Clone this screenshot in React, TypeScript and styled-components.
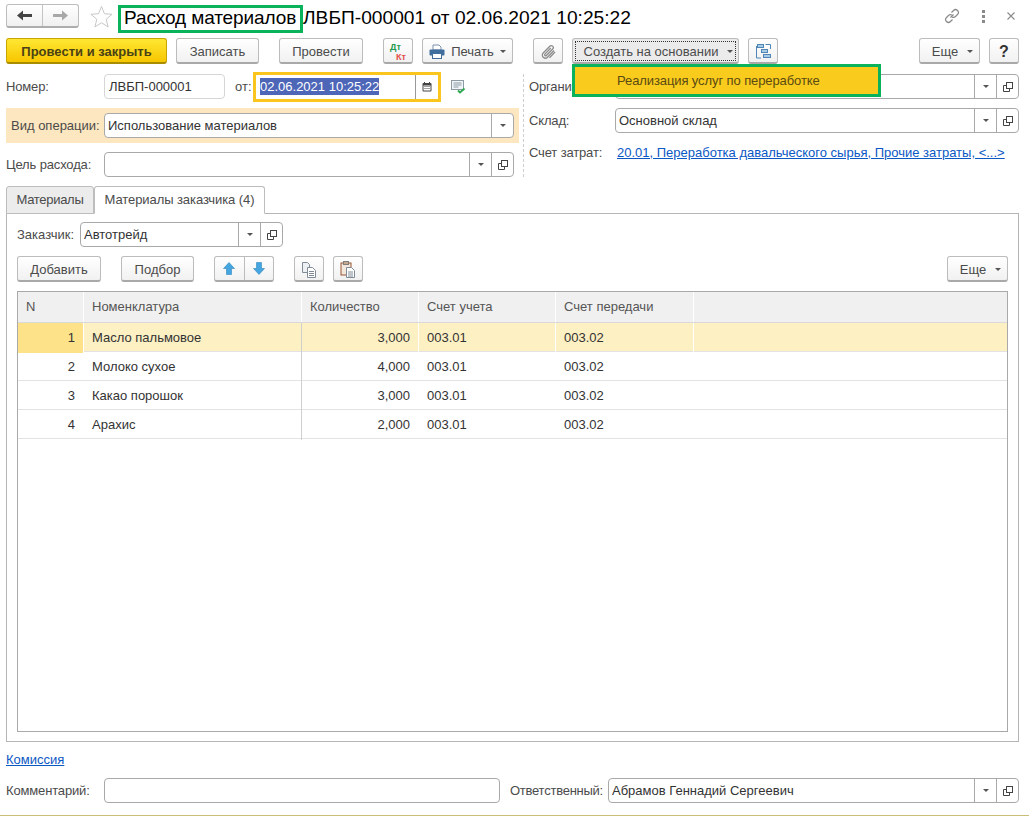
import React from "react"
import styled, { createGlobalStyle } from "styled-components"

const GlobalStyle = createGlobalStyle`
  html, body {
    margin: 0;
    padding: 0;
    background: #fff;
  }
  body {
    font-family: "Liberation Sans", Arial, sans-serif;
    font-size: 13px;
    color: #4b4b4b;
  }
`

const Caret = () => <CaretMark />

const OpenIcon = () => (
  <svg width="10" height="10" viewBox="0 0 10 10" fill="none" stroke="#444" strokeWidth="1">
    <rect x="3.5" y="0.5" width="6" height="6" />
    <path d="M3.5 3.5H0.5V9.5H6.5V6.5" />
  </svg>
)

const StarIcon = () => (
  <svg width="23" height="23" viewBox="0 0 24 24" fill="none" stroke="#c4c4c4" strokeWidth="1">
    <path d="M12 1.5l3 7.6 8 .6-6.1 5.2 2 8-6.9-4.4-6.9 4.4 2-8L.9 9.7l8-.6z" />
  </svg>
)

const NavArrow = ({ flip, color }: { flip?: boolean; color: string }) => (
  <svg width="15" height="11" viewBox="0 0 15 11" style={{ transform: flip ? "scaleX(-1)" : undefined }}>
    <path d="M0 5.5L6 0.5V4H15V7H6V10.5Z" fill={color} />
  </svg>
)

const LinkIcon = () => (
  <svg width="16" height="16" viewBox="0 0 16 16" fill="none" stroke="#8a8a8a" strokeWidth="1.2">
    <path d="M6.5 9.5l3-3" />
    <path d="M7.5 4.5l2-2a2.8 2.8 0 0 1 4 4l-2 2a2.8 2.8 0 0 1-3.5.4" />
    <path d="M8.5 11.5l-2 2a2.8 2.8 0 0 1-4-4l2-2a2.8 2.8 0 0 1 3.5-.4" />
  </svg>
)

const CloseIcon = () => (
  <svg width="8" height="8" viewBox="0 0 8 8" stroke="#8a8a8a" strokeWidth="1.1">
    <path d="M0.5 0.5l7 7M7.5 0.5l-7 7" />
  </svg>
)

const PrinterIcon = () => (
  <svg width="16" height="15" viewBox="0 0 16 15">
    <path d="M4 1h6l2 2v3H4z" fill="#fff" stroke="#7d93ab" />
    <rect x="0.5" y="5.5" width="15" height="6" rx="1" fill="#3f6d9c" />
    <rect x="3.5" y="9.5" width="9" height="5" fill="#fff" stroke="#3f6d9c" />
  </svg>
)

const ClipIcon = () => (
  <svg width="15" height="16" viewBox="0 0 15 16" fill="none" stroke="#8c8c8c" strokeWidth="1.3">
    <path d="M13 6.5l-6.5 6.7a3 3 0 0 1-4.3-4.2L8.8 2.2a2 2 0 0 1 2.9 2.8L5.4 11.5a1 1 0 0 1-1.5-1.4L9.8 4" />
    <path d="M14 8l-5.5 5.7" />
  </svg>
)

const StructureIcon = () => (
  <svg width="15" height="15" viewBox="0 0 15 15" fill="none" stroke="#4f86b5" strokeWidth="1">
    <rect x="1.5" y="0.5" width="6" height="3" fill="#a9cbe6" />
    <rect x="5.5" y="5.5" width="6" height="3" fill="#a9cbe6" />
    <rect x="7.5" y="10.5" width="7" height="3" fill="#a9cbe6" />
    <path d="M0.5 2v12H5M9.5 0.5H14.5V5" />
  </svg>
)

const CalendarIcon = () => (
  <svg width="10" height="10" viewBox="0 0 10 10">
    <rect x="0.5" y="1" width="9" height="8.5" rx="1" fill="#444" />
    <rect x="1.5" y="3.5" width="7" height="5" fill="#fff" />
    <path d="M2.5 0v2M7.5 0v2" stroke="#444" strokeWidth="1" />
    <path d="M2.5 4.5h1M4.5 4.5h1M6.5 4.5h1M2.5 6.5h1M4.5 6.5h1M6.5 6.5h1" stroke="#444" strokeWidth="1" />
  </svg>
)

const NoteCheckIcon = () => (
  <svg width="16" height="14" viewBox="0 0 16 14" fill="none">
    <rect x="0.5" y="0.5" width="12" height="9" fill="#f2f5f7" stroke="#8c9aa5" />
    <path d="M2.5 3h8M2.5 5h8M2.5 7h5" stroke="#8c9aa5" />
    <path d="M7 10.5l2 2 4.5-4" stroke="#2fa84f" strokeWidth="2" />
  </svg>
)

const CopyIcon = () => (
  <svg width="16" height="16" viewBox="0 0 16 16" fill="#fff" stroke="#7f8b96">
    <path d="M1.5 0.5h5l2 2v8h-7z" fill="#eef1f4" />
    <path d="M6.5 5.5h5l3 3v7h-8z" />
    <path d="M8 9.5h5M8 11.5h5M8 13.5h5" />
  </svg>
)

const PasteIcon = () => (
  <svg width="16" height="17" viewBox="0 0 16 17" fill="none">
    <rect x="1" y="2" width="10" height="12" fill="#f3e7dc" stroke="#96562f" />
    <rect x="3.5" y="0.5" width="5" height="3" fill="#c8a78f" stroke="#7e7e7e" />
    <path d="M6.5 6.5h5l3 3v7h-8z" fill="#fff" stroke="#7f8b96" />
    <path d="M8 11h5M8 13h5M8 15h5" stroke="#7f8b96" />
  </svg>
)

const MoveIcon = ({ down }: { down?: boolean }) => (
  <svg width="12" height="13" viewBox="0 0 12 13" style={{ transform: down ? "scaleY(-1)" : undefined }}>
    <path d="M6 0.5L11.5 6.5H8.5V12.5H3.5V6.5H0.5Z" fill="#45a5e0" stroke="#2f86bd" strokeWidth="0.6" />
  </svg>
)

const rows = [
  { n: 1, name: "Масло пальмовое", qty: "3,000" },
  { n: 2, name: "Молоко сухое", qty: "4,000" },
  { n: 3, name: "Какао порошок", qty: "3,000" },
  { n: 4, name: "Арахис", qty: "2,000" },
]

const columns = ["N", "Номенклатура", "Количество", "Счет учета", "Счет передачи", ""]

export default function App() {
  return (
    <Page>
      <GlobalStyle />
      <TitleRow>
        <NavGroup>
          <NavButton>
            <NavArrow color="#444" />
          </NavButton>
          <NavButton>
            <NavArrow flip color="#a8a8a8" />
          </NavButton>
        </NavGroup>
        <StarBox>
          <StarIcon />
        </StarBox>
        <TitleMark>Расход материалов</TitleMark>
        <TitleText>ЛВБП-000001 от 02.06.2021 10:25:22</TitleText>
        <WindowTools>
          <LinkIcon />
          <Dots>
            <i />
            <i />
            <i />
          </Dots>
          <CloseIcon />
        </WindowTools>
      </TitleRow>

      <Toolbar>
        <PrimaryButton>Провести и закрыть</PrimaryButton>
        <Button $w={83} $ml={9}>Записать</Button>
        <Button $w={84} $ml={20}>Провести</Button>
        <Button $w={30} $ml={20}>
          <DtKt>
            <span>Дт</span>
            <b>Кт</b>
          </DtKt>
        </Button>
        <Button $w={91} $ml={9}>
          <PrinterIcon />
          Печать
          <Caret />
        </Button>
        <Button $w={30} $ml={20}>
          <ClipIcon />
        </Button>
        <Button $w={167} $ml={9} $focused>
          <MenuCaption>Создать на основании</MenuCaption>
          <Caret />
        </Button>
        <Button $w={30} $ml={9}>
          <StructureIcon />
        </Button>
        <Spacer />
        <Button $w={61}>
          <MenuCaption>Еще</MenuCaption>
          <Caret />
        </Button>
        <Button $w={30} $ml={9}>
          <strong>?</strong>
        </Button>
      </Toolbar>

      <Popup>Реализация услуг по переработке</Popup>

      <FormGrid>
        <LeftColumn>
          <FieldRow>
            <Label>Номер:</Label>
            <PlainInput $w={121}>ЛВБП-000001</PlainInput>
            <InlineLabel>от:</InlineLabel>
            <DateBox>
              <Selected>02.06.2021 10:25:22</Selected>
              <DateAction>
                <CalendarIcon />
              </DateAction>
            </DateBox>
            <NoteBox>
              <NoteCheckIcon />
            </NoteBox>
          </FieldRow>
          <Highlight>
            <HighlightLabel>Вид операции:</HighlightLabel>
            <Select $w={410}>
              <SelectText>Использование материалов</SelectText>
              <SelectAction>
                <Caret />
              </SelectAction>
            </Select>
          </Highlight>
          <FieldRow>
            <Label>Цель расхода:</Label>
            <Select $w={410}>
              <SelectText />
              <SelectAction>
                <Caret />
              </SelectAction>
              <SelectAction>
                <OpenIcon />
              </SelectAction>
            </Select>
          </FieldRow>
        </LeftColumn>
        <RightColumn>
          <FieldRow>
            <WideLabel>Организация:</WideLabel>
            <Select $w={404}>
              <SelectText />
              <SelectAction>
                <Caret />
              </SelectAction>
              <SelectAction>
                <OpenIcon />
              </SelectAction>
            </Select>
          </FieldRow>
          <FieldRow>
            <WideLabel>Склад:</WideLabel>
            <Select $w={404}>
              <SelectText>Основной склад</SelectText>
              <SelectAction>
                <Caret />
              </SelectAction>
              <SelectAction>
                <OpenIcon />
              </SelectAction>
            </Select>
          </FieldRow>
          <LinkRow>
            <WideLabel>Счет затрат:</WideLabel>
            <CostLink>20.01, Переработка давальческого сырья, Прочие затраты, &lt;...&gt;</CostLink>
          </LinkRow>
        </RightColumn>
      </FormGrid>

      <Tabs>
        <Tab $w={88}>Материалы</Tab>
        <Tab $w={171} $active>Материалы заказчика (4)</Tab>
      </Tabs>
      <TabPanel>
        <CustomerRow>
          <CustomerLabel>Заказчик:</CustomerLabel>
          <Select $w={203}>
            <SelectText>Автотрейд</SelectText>
            <SelectAction>
              <Caret />
            </SelectAction>
            <SelectAction>
              <OpenIcon />
            </SelectAction>
          </Select>
        </CustomerRow>
        <TableBar>
          <Button $w={84}>Добавить</Button>
          <Button $w={73} $ml={20}>Подбор</Button>
          <SplitGroup>
            <SplitButton>
              <MoveIcon />
            </SplitButton>
            <SplitButton>
              <MoveIcon down />
            </SplitButton>
          </SplitGroup>
          <Button $w={30} $ml={20}>
            <CopyIcon />
          </Button>
          <Button $w={30} $ml={9}>
            <PasteIcon />
          </Button>
          <Spacer />
          <Button $w={61}>
            <MenuCaption>Еще</MenuCaption>
            <Caret />
          </Button>
        </TableBar>
        <Table>
          <HeaderRow>
            {columns.map((c, i) => (
              <HeaderCell key={i}>{c}</HeaderCell>
            ))}
          </HeaderRow>
          {rows.map((r, i) => (
            <BodyRow key={r.n} $current={i === 0}>
              <Cell $align="right" $accent={i === 0} $current={i === 0}>{r.n}</Cell>
              <NameCell>{r.name}</NameCell>
              <Cell $align="right" $current={i === 0}>{r.qty}</Cell>
              <Cell $current={i === 0}>003.01</Cell>
              <Cell $current={i === 0}>003.02</Cell>
              <Cell />
            </BodyRow>
          ))}
        </Table>
      </TabPanel>

      <FooterLink>Комиссия</FooterLink>
      <FooterRow>
        <Label>Комментарий:</Label>
        <PlainInput $w={396} $strong />
        <ResponsibleLabel>Ответственный:</ResponsibleLabel>
        <Select $w={411}>
          <SelectText>Абрамов Геннадий Сергеевич</SelectText>
          <SelectAction>
            <Caret />
          </SelectAction>
          <SelectAction>
            <OpenIcon />
          </SelectAction>
        </Select>
      </FooterRow>
    </Page>
  )
}

const Page = styled.div`
  position: relative;
  box-sizing: border-box;
  width: 1029px;
  height: 816px;
  padding: 4px 10px 0 6px;
  overflow: hidden;
  border-bottom: 1px solid #c9bd78;
`

const TitleRow = styled.div`
  display: flex;
  align-items: flex-start;
  height: 29px;
`

const NavGroup = styled.div`
  display: flex;
  box-sizing: border-box;
  width: 73px;
  height: 24px;
  border: 1px solid #bdbdbd;
  border-bottom: 2px solid #adadad;
  border-radius: 3px;
  background: linear-gradient(#fff, #f0f0f0);
`

const NavButton = styled.div`
  flex: 1;
  display: flex;
  align-items: center;
  justify-content: center;
  & + & {
    border-left: 1px solid #c4c4c4;
  }
`

const StarBox = styled.div`
  display: flex;
  height: 23px;
  margin: 1px 5px 0 11px;
`

const TitleMark = styled.div`
  box-sizing: border-box;
  width: 185px;
  height: 28px;
  margin-top: 1px;
  padding-left: 3px;
  border: 3px solid #0bb25c;
  font-size: 19px;
  line-height: 20px;
  letter-spacing: -0.1px;
  color: #000;
  white-space: nowrap;
`

const TitleText = styled.div`
  margin-top: 1px;
  font-size: 19.2px;
  line-height: 26px;
  color: #000;
  white-space: nowrap;
`

const WindowTools = styled.div`
  display: flex;
  align-items: center;
  gap: 22px;
  height: 24px;
  margin-left: auto;
  margin-right: 4px;
`

const Dots = styled.div`
  display: flex;
  flex-direction: column;
  gap: 2px;
  & i {
    display: block;
    width: 3px;
    height: 3px;
    background: #8a8a8a;
  }
`

const Toolbar = styled.div`
  display: flex;
  align-items: center;
  height: 26px;
  margin-top: 5px;
`

const Spacer = styled.div`
  flex: 1;
`

const Button = styled.div<{ $w: number; $ml?: number; $focused?: boolean }>`
  box-sizing: border-box;
  display: flex;
  align-items: center;
  justify-content: center;
  gap: 6px;
  flex: none;
  width: ${(p) => p.$w}px;
  height: 26px;
  margin-left: ${(p) => p.$ml ?? 0}px;
  padding-top: 2px;
  border: 1px solid #bcbcbc;
  border-bottom: 2px solid #a9a9a9;
  border-radius: 3px;
  background: ${(p) => (p.$focused ? "#ebebeb" : "linear-gradient(#ffffff, #f1f1f1)")};
  outline: ${(p) => (p.$focused ? "1px dotted #333" : "none")};
  outline-offset: -4px;
  color: #4b4b4b;
  white-space: nowrap;
  & strong {
    font-size: 16px;
    color: #333;
  }
`

const MenuCaption = styled.span`
  margin-left: 6px;
  margin-right: 3px;
`

const PrimaryButton = styled.div`
  box-sizing: border-box;
  display: flex;
  align-items: center;
  justify-content: center;
  flex: none;
  width: 161px;
  height: 26px;
  padding-top: 2px;
  border: 1px solid #c9a500;
  border-bottom: 2px solid #a98d00;
  border-radius: 3px;
  background: linear-gradient(#ffe733, #f7c600);
  font-weight: 700;
  color: #4a4215;
  white-space: nowrap;
`

const CaretMark = styled.span`
  display: inline-block;
  width: 0;
  height: 0;
  border-left: 3px solid transparent;
  border-right: 3px solid transparent;
  border-top: 3px solid #555;
`

const DtKt = styled.div`
  display: flex;
  flex-direction: column;
  font-size: 9px;
  line-height: 10px;
  font-weight: 700;
  & span {
    color: #1f9a4d;
  }
  & b {
    margin-left: 6px;
    color: #e2504a;
  }
`

const Popup = styled.div`
  position: absolute;
  left: 572px;
  top: 64px;
  z-index: 2;
  box-sizing: border-box;
  width: 309px;
  height: 33px;
  padding-left: 42px;
  border: 3px solid #0bb25c;
  background: #f9cb1c;
  line-height: 27px;
  letter-spacing: -0.1px;
  color: #5a4a14;
  white-space: nowrap;
`

const FormGrid = styled.div`
  display: grid;
  grid-template-columns: 517px 1fr;
  height: 102px;
  margin-top: 10px;
`

const LeftColumn = styled.div`
  display: flex;
  flex-direction: column;
`

const RightColumn = styled.div`
  display: flex;
  flex-direction: column;
  gap: 9px;
  padding-left: 5px;
  border-left: 1px dashed #cfcfcf;
`

const FieldRow = styled.div`
  display: flex;
  align-items: center;
  height: 25px;
`

const Label = styled.div`
  flex: none;
  width: 98px;
  letter-spacing: -0.15px;
  white-space: nowrap;
`

const WideLabel = styled.div`
  flex: none;
  width: 86px;
  letter-spacing: -0.15px;
  white-space: nowrap;
`

const InlineLabel = styled.div`
  flex: none;
  width: 18px;
  margin-left: 10px;
`

const PlainInput = styled.div<{ $w: number; $strong?: boolean }>`
  box-sizing: border-box;
  flex: none;
  width: ${(p) => p.$w}px;
  height: 25px;
  padding-left: 4px;
  border: 1px solid ${(p) => (p.$strong ? "#a9a9a9" : "#d6d6d6")};
  border-radius: 4px;
  line-height: 23px;
  color: #333;
`

const DateBox = styled.div`
  box-sizing: border-box;
  display: flex;
  align-items: center;
  justify-content: space-between;
  flex: none;
  width: 188px;
  height: 30px;
  padding-left: 4px;
  border: 3px solid #fac51c;
`

const Selected = styled.span`
  background: #4e66b8;
  color: #fff;
  line-height: 17px;
  white-space: nowrap;
`

const DateAction = styled.div`
  display: flex;
  align-items: center;
  justify-content: center;
  flex: none;
  width: 22px;
  height: 24px;
  border-left: 1px solid #999;
`

const NoteBox = styled.div`
  display: flex;
  margin-left: 10px;
`

const Highlight = styled.div`
  display: flex;
  align-items: center;
  box-sizing: border-box;
  width: 513px;
  height: 35px;
  margin-top: 9px;
  padding-left: 5px;
  background: #fde7c0;
  & + div {
    margin-top: 9px;
  }
`

const HighlightLabel = styled.div`
  flex: none;
  width: 93px;
  white-space: nowrap;
`

const Select = styled.div<{ $w: number }>`
  box-sizing: border-box;
  display: flex;
  align-items: stretch;
  flex: none;
  width: ${(p) => p.$w}px;
  height: 25px;
  border: 1px solid #a9a9a9;
  border-radius: 4px;
  background: #fff;
`

const SelectText = styled.div`
  flex: 1;
  padding-left: 3px;
  line-height: 23px;
  color: #333;
  white-space: nowrap;
  overflow: hidden;
`

const SelectAction = styled.div`
  display: flex;
  align-items: center;
  justify-content: center;
  flex: none;
  width: 21px;
  border-left: 1px solid #a9a9a9;
`

const LinkRow = styled.div`
  display: flex;
  align-items: center;
  height: 20px;
`

const CostLink = styled.span`
  margin-left: 2px;
  color: #0b57c4;
  text-decoration: underline;
  white-space: nowrap;
`

const Tabs = styled.div`
  display: flex;
  align-items: flex-end;
  height: 27px;
  margin-top: 10px;
`

const Tab = styled.div<{ $w: number; $active?: boolean }>`
  position: relative;
  z-index: 1;
  box-sizing: border-box;
  width: ${(p) => p.$w}px;
  height: 28px;
  margin-bottom: -1px;
  border: 1px solid #bdbdbd;
  border-bottom: 1px solid ${(p) => (p.$active ? "#fff" : "#bdbdbd")};
  border-radius: 3px 3px 0 0;
  background: ${(p) => (p.$active ? "#fff" : "#ececec")};
  line-height: 26px;
  letter-spacing: ${(p) => (p.$active ? "-0.08px" : "-0.3px")};
  text-align: center;
  white-space: nowrap;
`

const TabPanel = styled.div`
  box-sizing: border-box;
  height: 529px;
  padding: 8px 10px 0;
  border: 1px solid #b5b5b5;
`

const CustomerRow = styled.div`
  display: flex;
  align-items: center;
  height: 25px;
`

const CustomerLabel = styled.div`
  flex: none;
  width: 63px;
`

const TableBar = styled.div`
  display: flex;
  align-items: center;
  height: 26px;
  margin-top: 9px;
`

const SplitGroup = styled.div`
  display: flex;
  flex: none;
  box-sizing: border-box;
  width: 60px;
  height: 26px;
  margin-left: 20px;
  border: 1px solid #bcbcbc;
  border-bottom: 2px solid #a9a9a9;
  border-radius: 3px;
  background: linear-gradient(#ffffff, #f1f1f1);
`

const SplitButton = styled.div`
  flex: 1;
  display: flex;
  align-items: center;
  justify-content: center;
  & + & {
    border-left: 1px solid #bcbcbc;
  }
`

const Table = styled.div`
  box-sizing: border-box;
  height: 441px;
  margin-top: 9px;
  border: 1px solid #a9a9a9;
`

const gridColumns = "66px 218px 117px 137px 138px 1fr"

const HeaderRow = styled.div`
  display: grid;
  grid-template-columns: ${gridColumns};
  box-sizing: border-box;
  height: 31px;
  border-bottom: 1px solid #d9d9d9;
`

const HeaderCell = styled.div`
  box-sizing: border-box;
  padding-left: 8px;
  border-right: 1px solid #fff;
  background: #f0f0f0;
  line-height: 29px;
  color: #555;
  &:last-child {
    border-right: none;
  }
`

const BodyRow = styled.div<{ $current?: boolean }>`
  display: grid;
  grid-template-columns: ${gridColumns};
  box-sizing: border-box;
  height: 29px;
  border-bottom: 1px solid #e3e3e3;
  background: ${(p) => (p.$current ? "#fdf0c3" : "#fff")};
`

const Cell = styled.div<{ $align?: string; $accent?: boolean; $current?: boolean }>`
  box-sizing: border-box;
  padding: 0 8px;
  border-right: 1px solid ${(p) => (p.$current ? "#fff" : "transparent")};
  background: ${(p) => (p.$accent ? "#fde28a" : "transparent")};
  text-align: ${(p) => p.$align ?? "left"};
  line-height: 30px;
  color: #333;
`

const NameCell = styled(Cell)`
  border-right: 1px solid #cfcfcf;
`

const FooterLink = styled.div`
  margin-top: 10px;
  line-height: 15px;
  color: #0b57c4;
  text-decoration: underline;
`

const FooterRow = styled.div`
  display: flex;
  align-items: center;
  height: 25px;
  margin-top: 11px;
`

const ResponsibleLabel = styled.div`
  flex: none;
  width: 98px;
  margin-left: 10px;
  letter-spacing: -0.25px;
  white-space: nowrap;
`
